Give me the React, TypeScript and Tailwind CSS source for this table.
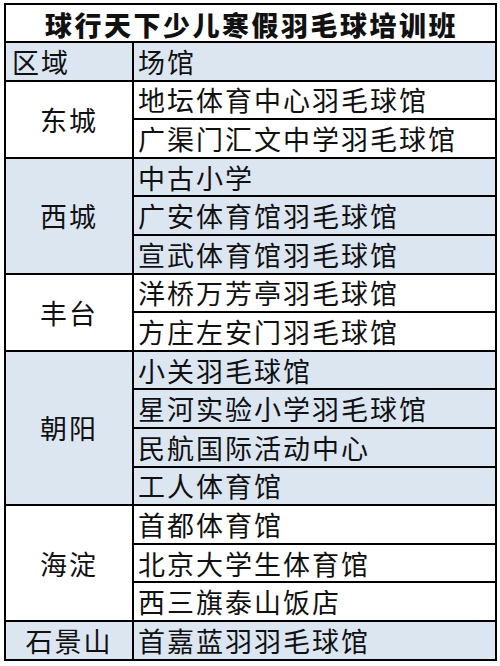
import React from "react";

const groups: { name: string; blue: boolean; venues: string[] }[] = [
  { name: "东城", blue: false, venues: ["地坛体育中心羽毛球馆", "广渠门汇文中学羽毛球馆"] },
  { name: "西城", blue: true, venues: ["中古小学", "广安体育馆羽毛球馆", "宣武体育馆羽毛球馆"] },
  { name: "丰台", blue: false, venues: ["洋桥万芳亭羽毛球馆", "方庄左安门羽毛球馆"] },
  { name: "朝阳", blue: true, venues: ["小关羽毛球馆", "星河实验小学羽毛球馆", "民航国际活动中心", "工人体育馆"] },
  { name: "海淀", blue: false, venues: ["首都体育馆", "北京大学生体育馆", "西三旗泰山饭店"] },
  { name: "石景山", blue: true, venues: ["首嘉蓝羽羽毛球馆"] },
];

export default function App() {
  return (
    <div className="w-[500px] h-[666px] bg-white pt-[3px] pl-[4px] text-[#111]" style={{ fontFamily: '"Noto Sans CJK SC", "Noto Sans", sans-serif' }}>
      <div className="w-[493px] border-2 border-black flex flex-col">
        <div className="h-[38px] border-b-2 border-black flex items-center justify-center pt-[2px] pl-[2px] text-[27px] font-black tracking-[2.5px] leading-none bg-white">
          球行天下少儿寒假羽毛球培训班
        </div>
        <div className="h-[38.6px] border-b-2 border-black flex bg-[#dce6f1] text-[27px] leading-none tracking-[2px]">
          <div className="w-[128px] border-r-2 border-black flex items-center pl-[6px]">区域</div>
          <div className="flex-1 flex items-center pl-[4px]">场馆</div>
        </div>
        {groups.map((g, gi) => {
          const last = gi === groups.length - 1;
          return (
            <div
              key={g.name}
              className={`flex text-[27px] leading-none tracking-[2px] ${g.blue ? "bg-[#dce6f1]" : "bg-white"} ${last ? "" : "border-b-2 border-black"}`}
            >
              <div className="w-[128px] border-r-2 border-black flex items-center justify-center">{g.name}</div>
              <div className="flex-1 flex flex-col">
                {g.venues.map((v, vi) => {
                  const lastRow = vi === g.venues.length - 1;
                  return (
                    <div
                      key={v}
                      className={`${lastRow ? "h-[36.6px]" : "h-[38.6px] border-b-2 border-black"} flex items-center pl-[4px] whitespace-nowrap`}
                    >
                      {v}
                    </div>
                  );
                })}
              </div>
            </div>
          );
        })}
      </div>
    </div>
  );
}
